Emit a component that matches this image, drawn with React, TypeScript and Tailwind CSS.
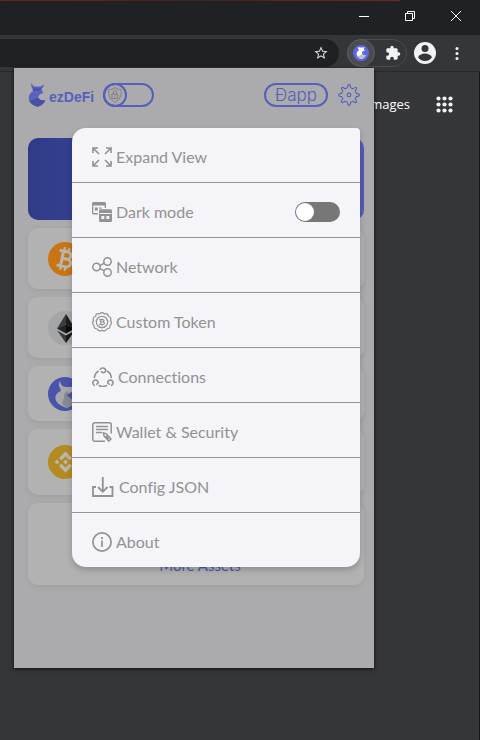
import React, { useState } from "react";
import type { ReactNode } from "react";

const line = {
  fill: "none",
  stroke: "currentColor",
  strokeLinecap: "round",
  strokeLinejoin: "round",
} as const;

function ExpandIcon() {
  return (
    <svg viewBox="0 0 20 20" className="h-5 w-5" fill="none" stroke="currentColor" strokeWidth="1.6" aria-hidden="true">
      <path d="M1 6V1h5M1 1l6 6M14 1h5v5M19 1l-6 6M1 14v5h5M1 19l6-6M19 14v5h-5M19 19l-6-6" />
    </svg>
  );
}

function WindowsIcon() {
  return (
    <svg viewBox="0 0 20 20" className="h-5 w-5" fill="currentColor" aria-hidden="true">
      <path fillRule="evenodd" d="M1.500 0h11A1.500 1.500 0 0 1 14 1.500V6h-1.300V3.500H1.300V11H6v1.500H1.500A1.500 1.500 0 0 1 0 11V1.500A1.500 1.500 0 0 1 1.500 0z" />
      <path d="M2.800 5.500h3v3h-3zM7 5.500h2.500v1.200H7z" />
      <path fillRule="evenodd" d="M8.500 7.300h10A1.500 1.500 0 0 1 20 8.800V18.500A1.500 1.500 0 0 1 18.500 20h-10A1.500 1.500 0 0 1 7 18.500V8.800A1.500 1.500 0 0 1 8.500 7.300zM7.500 11v1h12v-1zM9.300 14v3h3v-3zM14.300 14v3h3v-3z" />
    </svg>
  );
}

function NetworkIcon() {
  return (
    <svg viewBox="0 0 20 20" className="h-5 w-5" {...line} strokeWidth="1.500" aria-hidden="true">
      <circle cx="4.500" cy="10" r="3.700" />
      <circle cx="15.500" cy="4.500" r="3.700" />
      <circle cx="15.500" cy="15.500" r="3.700" />
      <path d="M8 8.300l4-2M8 11.700l4 2" />
    </svg>
  );
}

function TokenIcon() {
  return (
    <svg viewBox="0 0 20 20" className="h-5 w-5" {...line} strokeWidth="1.200" aria-hidden="true">
      <path d="M7.600 1.900Q10-.7 12.400 1.900Q15.800.7 16.400 4.200Q19.700 5.200 18.400 8.500Q20.700 11.200 18 13.400Q18.200 17 14.700 17Q12.900 20.200 10 18.200Q7.100 20.200 5.300 17Q1.800 17 2 13.400Q-.7 11.200 1.600 8.500Q.3 5.200 3.600 4.200Q4.200.7 7.600 1.900z" />
      <circle cx="10" cy="10" r="5.700" />
      <path d="M7.600 7.700h3.200a1.150 1.150 0 0 1 0 2.300H8.800h2.300a1.250 1.250 0 0 1 0 2.500H7.600M8.800 7.700v4.800M10 7v.7M10 12.500v.7" />
    </svg>
  );
}

function ConnectionsIcon() {
  return (
    <svg viewBox="0 0 22 20" className="h-5 w-[22px]" {...line} strokeWidth="1.600" aria-hidden="true">
      <path d="M8.200 2.400C9.200.8 11.600.4 13 1.900c1.400 1.600.4 3.900-1.800 3.900l-1.700-1" />
      <path d="M6.300 4.300C3.900 5.700 2.600 7.900 2.500 10.500M15.300 4.300c2.500 1.400 3.800 3.600 3.900 6.200M7.300 18.700c2.200 1 4.800 1 7 0" />
      <path d="M2.200 18.300C.3 17 .3 14.300 2.300 13.300c2-.9 4 .6 3.800 2.600L4.700 17.300" />
      <path d="M19.600 18.300c1.900-1.300 1.900-4-.1-5-2-.9-4 .6-3.800 2.600l1.400 1.400" />
    </svg>
  );
}

function WalletIcon() {
  return (
    <svg viewBox="0 0 20 20" className="h-5 w-5" {...line} strokeWidth="1.500" aria-hidden="true">
      <path d="M19.200 11V2.800A2 2 0 0 0 17.200.8H2.800A2 2 0 0 0 .8 2.800v14.400a2 2 0 0 0 2 2h9.700M4.500 4.500h11M4.500 7.500h11M4.500 10.500h5" />
      <path d="M11.300 10.800l.8 3.300 4.600 5 2.300-2.200-4.600-5zM14.300 14.300l2 2.200" />
    </svg>
  );
}

function DownloadIcon() {
  return (
    <svg viewBox="0 0 22 20" className="h-5 w-[22px]" fill="none" stroke="currentColor" strokeWidth="1.800" aria-hidden="true">
      <path d="M4 10H1v9h19.500v-9h-3M10.800 0v14.500M6 10l4.800 4.800L15.500 10" />
    </svg>
  );
}

function InfoIcon() {
  return (
    <svg viewBox="0 0 20 20" className="h-5 w-5" fill="none" stroke="currentColor" strokeWidth="1.700" aria-hidden="true">
      <circle cx="10" cy="10" r="9.100" />
      <path d="M10 8.500v6.500M10 5v2" />
    </svg>
  );
}

function BullLogo() {
  return (
    <svg viewBox="0 0 18 24" className="h-6 w-[18px]" aria-hidden="true">
      <path fill="#5963bd" d="M3.600 0C2.800 2.300 3.200 4.300 4.600 5.600L5 8C2 9.800.6 12.200.8 15.500c.3 3.800 4 6.500 8.700 8.300 4-1.300 6.800-3.200 7.700-6.500-3.300.5-5.700-.3-7-2.800.2-2 1.800-3.500 5-4.400L13.600 6.500l.6-1.300C15.600 4.200 16 2.500 15.200 1c-.6 1.500-1.700 2.300-3.200 2.500H6.600C5.200 3 4.200 2 3.600 0z" />
      <path fill="#4651a4" d="M10.200 14.500C7.500 15.500 5 17 1.200 18c1.300 2.600 4.500 4.500 8.300 5.800 4-1.300 6.800-3.200 7.700-6.500-3.300.5-5.700-.3-7-2.800zM4.600 5.600h8.400L12 7.600H5z" />
    </svg>
  );
}

function BitcoinCoin() {
  return (
    <svg viewBox="0 0 34 34" className="h-[34px] w-[34px]" aria-hidden="true">
      <circle cx="17" cy="17" r="17" fill="#c87512" />
      <g transform="rotate(12 17 17)" fill="none" stroke="#b9b6b3" strokeWidth="3">
        <path d="M10 9.500h8.500a3.500 3.500 0 0 1 0 7.300H14h5.500a3.800 3.800 0 0 1 0 7.700H10M14 9.500v15" />
        <path d="M14.500 5.500v4M19 5.500v4M14.500 24.500v4M19 24.500v4" strokeWidth="2.200" />
      </g>
    </svg>
  );
}

function EthereumCoin() {
  return (
    <svg viewBox="0 0 34 34" className="h-[34px] w-[34px]" aria-hidden="true">
      <circle cx="17" cy="17" r="17" fill="#a4a6a8" />
      <path fill="#3b3b3c" d="M18 3v10.500L9 17.500z" />
      <path fill="#1d1d1e" d="M18 3v10.500l9 4z" />
      <path fill="#222223" d="M18 13.500v9l-9-5z" />
      <path fill="#0c0c0d" d="M18 13.500v9l9-5z" />
      <path fill="#3b3b3c" d="M9 19.500l9 5V32z" />
      <path fill="#1a1a1b" d="M27 19.500l-9 5V32z" />
    </svg>
  );
}

function EzdCoin() {
  return (
    <svg viewBox="0 0 34 34" className="h-[34px] w-[34px]" aria-hidden="true">
      <circle cx="17" cy="17" r="17" fill="#4953aa" />
      <path fill="#a6a6ab" d="M12 4c-1.800 2.500-1.500 5.500.3 7.500l.4 2.500C8.500 16 7 18.500 7.500 22c.6 4 5 7 11.500 9l9-5-1-12-3-4h-7c-2.800-.6-4.600-2.500-5-6z" />
      <path fill="#898a90" d="M19 14c-2.500 1.500-3.500 3.500-3 6.500L14 27l5 4 8-5-2-7z" />
      <path fill="#4953aa" d="M18.500 18.500L25 14l5 10-5-1z" />
    </svg>
  );
}

function BnbCoin() {
  return (
    <svg viewBox="0 0 34 34" className="h-[34px] w-[34px]" aria-hidden="true">
      <circle cx="17" cy="17" r="17" fill="#b48a22" />
      <path fill="#b8b7b4" d="M17.500 6.500l6.500 6.500-2.400 2.400-4.100-4.100-4.100 4.100L11 13zM17.500 27.500L24 21l-2.400-2.400-4.100 4.100-4.100-4.100L11 21zM9 14.600l2.400 2.400L9 19.400 6.600 17zM17.500 14.600l2.400 2.400-2.400 2.400-2.400-2.400zM26 14.600l2.400 2.400-2.400 2.400-2.400-2.400z" />
    </svg>
  );
}

function WindowBar() {
  const button = "flex h-full w-[46px] items-center justify-center pb-1";
  return (
    <div className="flex h-[35px] flex-col bg-[#202124] text-white">
      <div className="mr-20 h-px bg-linear-to-r from-[#66261f] via-[#4a2020] to-[#6d2a1d]" />
      <div className="flex flex-1 justify-end pr-px">
        <button className={button} aria-label="Minimize">
          <svg viewBox="0 0 10 10" className="h-[10px] w-[10px]" stroke="currentColor"><path d="M0 5.500h10" /></svg>
        </button>
        <button className={button} aria-label="Restore">
          <svg viewBox="0 0 10 10" className="h-[10px] w-[10px]" fill="none" stroke="currentColor"><path d="M.5 2.500h7v7h-7zM2.500 2.500v-2h7v7h-2" /></svg>
        </button>
        <button className={button} aria-label="Close">
          <svg viewBox="0 0 10 10" className="h-[10px] w-[10px]" stroke="currentColor"><path d="M0 0l10 10M10 0L0 10" /></svg>
        </button>
      </div>
    </div>
  );
}

function Toolbar() {
  return (
    <div className="flex h-[37px] items-center border-b border-[#27282b] bg-[#35363a] pr-[15px] text-[#f1f3f4]">
      <div className="flex h-7 flex-1 items-center justify-end rounded-r-full bg-[#202124] pr-[10px]">
        <button aria-label="Bookmark this page">
          <svg viewBox="0 0 24 24" className="h-4 w-4" fill="#d5d6d8" aria-hidden="true">
            <path d="M22 9.240l-7.190-.62L12 2 9.190 8.630 2 9.240l5.460 4.730L5.820 21 12 17.270 18.180 21l-1.630-7.030L22 9.240zM12 15.400l-3.760 2.270 1-4.280-3.320-2.880 4.380-.38L12 6.100l1.710 4.040 4.380.38-3.320 2.880 1 4.280L12 15.400z" />
          </svg>
        </button>
      </div>
      <div className="ml-2 flex h-7 w-[60px] items-center gap-[10px] rounded-full border border-[#4b4c50]">
        <button className="-ml-px flex h-7 w-7 shrink-0 items-center justify-center rounded-full border border-[#5c5d61] bg-[#4b4c50]" aria-label="ezDeFi">
          <svg viewBox="0 0 34 34" className="h-4 w-4" aria-hidden="true">
            <circle cx="17" cy="17" r="17" fill="#5b68e0" />
            <path fill="#fff" d="M11 4c-1 3 0 5 2 7-4 2-6 5-5 10 1 4 5 7 11 9 4-2 7-4 8-8-5 0-8-2-8-5s2-4 6-5l-2-4 2-4c-4 2-10 2-14 0z" />
            <path fill="#bfc0c6" d="M18 19c-2 3-5 4-9 5 2 3 6 5 10 6 4-2 7-4 8-8-4 0-7-1-9-3z" />
          </svg>
        </button>
        <button aria-label="Extensions">
          <svg viewBox="0 0 24 24" className="h-4 w-4" fill="currentColor" aria-hidden="true">
            <path d="M20.500 11H19V7c0-1.100-.9-2-2-2h-4V3.500a2.500 2.500 0 0 0-5 0V5H4c-1.100 0-2 .9-2 2v3.800h1.500a2.700 2.700 0 0 1 0 5.400H2V20c0 1.100.9 2 2 2h3.800v-1.500a2.700 2.700 0 0 1 5.400 0V22H17c1.100 0 2-.9 2-2v-4h1.500a2.500 2.500 0 0 0 0-5z" />
          </svg>
        </button>
      </div>
      <button className="ml-[7px]" aria-label="Profile">
        <svg viewBox="0 0 22 22" className="h-[22px] w-[22px]" aria-hidden="true">
          <circle cx="11" cy="11" r="11" fill="#f1f3f4" />
          <circle cx="11" cy="6.500" r="3.500" fill="#35363a" />
          <path fill="#35363a" d="M4 15.300c1.300-2.600 4.200-3.800 7-3.800s5.700 1.200 7 3.800c-1.400 2.300-4 3.700-7 3.700s-5.600-1.400-7-3.700z" />
        </svg>
      </button>
      <button className="ml-[13px] w-4" aria-label="Browser menu">
        <svg viewBox="0 0 16 16" className="h-4 w-4" fill="currentColor" aria-hidden="true">
          <circle cx="8" cy="3.500" r="1.500" /><circle cx="8" cy="8.500" r="1.500" /><circle cx="8" cy="13.500" r="1.500" />
        </svg>
      </button>
    </div>
  );
}

function PopupHeader() {
  const [secure, setSecure] = useState(false);
  return (
    <header className="flex h-[70px] items-center px-[14px] pb-4">
      <BullLogo />
      <span className="ml-[3px] pt-1 font-['Liberation_Sans',sans-serif] text-[14px] leading-5 font-bold text-[#5660bc]">ezDeFi</span>
      <label className="ml-[9px] block cursor-pointer">
        <input type="checkbox" className="peer sr-only" aria-label="Secure mode" checked={secure} onChange={() => setSecure(!secure)} />
        <span className={`flex h-6 w-[51px] rounded-full border-2 border-[#5660bc] ${secure ? "justify-end" : ""}`}>
          <span className="-m-0.5 flex h-6 w-6 items-center justify-center rounded-full border-2 border-[#5660bc]">
            <svg viewBox="0 0 16 16" className="h-4 w-4 shrink-0 text-[#7e7e86]" {...line} strokeWidth="1" aria-hidden="true">
              <path d="M8 .7c2 1.500 4 2 6.200 1.800.5 6-1.200 10-6.200 12.800C3 12.500 1.300 8.500 1.800 2.500 4 2.700 6 2.200 8 .7z" />
              <path d="M5.300 7h5.400v4.500H5.300zM6.300 7V5.500a1.700 1.700 0 0 1 3.400 0V7M8 8.700v1.200" />
            </svg>
          </span>
        </span>
      </label>
      <button className="ml-auto flex h-6 w-16 items-center justify-center rounded-full border-2 border-[#5660bc] font-[Inter,sans-serif] text-[17px] leading-5 font-light text-[#5660bc]">
        Đapp
      </button>
      <button className="ml-[10px]" aria-label="Settings">
        <svg viewBox="0 0 22 22" className="h-[22px] w-[22px] text-[#5660bc]" {...line} strokeWidth="1.100" aria-hidden="true">
          <path d="M9.400 3.700Q9.600.6 11 .6T12.600 3.700Q13.800 4 15 4.900Q17.300 2.800 18.300 3.700T17.100 7Q17.900 8.200 18.300 9.400Q21.400 9.600 21.400 11T18.300 12.600Q18 13.800 17.100 15Q19.200 17.300 18.300 18.300T15 17.100Q13.800 17.900 12.600 18.300Q12.400 21.400 11 21.400T9.400 18.300Q8.200 18 7 17.100Q4.700 19.200 3.700 18.300T4.900 15Q4.100 13.800 3.700 12.600Q.6 12.400 .6 11T3.700 9.400Q4 8.200 4.900 7Q2.800 4.700 3.700 3.700T7 4.900Q8.200 4.100 9.400 3.700z" />
          <circle cx="11" cy="11" r="1.900" />
        </svg>
      </button>
    </header>
  );
}

function AssetCard({ height, children }: { height: string; children: ReactNode }) {
  return (
    <div className={`flex items-center rounded-[10px] bg-[#b2b2b2] pl-5 shadow-[0_2px_6px_rgba(0,0,0,0.07)] ${height}`}>
      {children}
    </div>
  );
}

const items = [
  { label: "Expand View", icon: <ExpandIcon />, gap: "gap-1" },
  { label: "Dark mode", icon: <WindowsIcon />, gap: "gap-1", toggle: true },
  { label: "Network", icon: <NetworkIcon />, gap: "gap-1" },
  { label: "Custom Token", icon: <TokenIcon />, gap: "gap-1" },
  { label: "Connections", icon: <ConnectionsIcon />, gap: "gap-1" },
  { label: "Wallet & Security", icon: <WalletIcon />, gap: "gap-1" },
  { label: "Config JSON", icon: <DownloadIcon />, gap: "gap-[5px]" },
  { label: "About", icon: <InfoIcon />, gap: "gap-1" },
];

function SettingsMenu() {
  const [dark, setDark] = useState(false);
  return (
    <nav className="absolute top-[60px] right-[14px] left-[58px] divide-y divide-[#969698] rounded-[14px] rounded-tr-[4px] bg-[#f4f4f9] text-[16px] leading-6 text-[#929292] shadow-[0_3px_6px_rgba(0,0,0,0.2)] [font-variant-ligatures:none]">
      {items.map(({ label, icon, gap, toggle }) => {
        const row = `flex h-[55px] w-full items-center px-5 pt-1 last:h-[54px] ${gap}`;
        return toggle ? (
          <label key={label} className={`${row} cursor-pointer`}>
            {icon}
            {label}
            <input type="checkbox" className="sr-only" checked={dark} onChange={() => setDark(!dark)} />
            <span className={`ml-auto flex h-5 w-[45px] items-center rounded-full bg-[#777777] p-px ${dark ? "justify-end" : ""}`}>
              <span className="h-[18px] w-[18px] rounded-full bg-white" />
            </span>
          </label>
        ) : (
          <button key={label} className={row}>
            {icon}
            {label}
          </button>
        );
      })}
    </nav>
  );
}

function ExtensionPopup() {
  return (
    <section className="absolute top-[68px] left-[14px] h-[600px] w-[360px] bg-[#ababad] shadow-[0_1px_4px_rgba(0,0,0,0.7)]">
      <PopupHeader />
      <div className="flex flex-col gap-2 pr-[10px] pl-[14px]">
        <div className="h-[82px] rounded-[10px] bg-linear-to-r from-[#303b88] to-[#535cb8]" />
        <AssetCard height="h-[61px]"><BitcoinCoin /></AssetCard>
        <AssetCard height="h-[61px]"><EthereumCoin /></AssetCard>
        <AssetCard height="h-[55px]"><EzdCoin /></AssetCard>
        <AssetCard height="h-[66px]"><BnbCoin /></AssetCard>
        <div className="flex h-[82px] items-end justify-center rounded-[10px] bg-[#b2b2b2] pb-[10px] pl-2 shadow-[0_2px_6px_rgba(0,0,0,0.07)]">
          <button className="text-[15px] leading-5 text-[#5058b4]">More Assets</button>
        </div>
      </div>
      <SettingsMenu />
    </section>
  );
}

export default function App() {
  return (
    <div className="relative flex min-h-screen flex-col bg-[#35363a] font-[Lato,'Noto_Sans',sans-serif]">
      <WindowBar />
      <Toolbar />
      <main className="flex flex-1 flex-col border-r border-[#151618]">
        <div className="flex h-16 items-center justify-end gap-[26px] pr-[26px]">
          <a href="#images" className="font-['Open_Sans',sans-serif] text-[13px] leading-5 text-white">Images</a>
          <button aria-label="Google apps">
            <svg viewBox="0 0 17 17" className="h-[17px] w-[17px]" fill="#f1f3f4" aria-hidden="true">
              {[2.5, 8.5, 14.5].map((y) => [2.5, 8.5, 14.5].map((x) => <circle key={`${x}-${y}`} cx={x} cy={y} r="2.100" />))}
            </svg>
          </button>
        </div>
      </main>
      <ExtensionPopup />
    </div>
  );
}
